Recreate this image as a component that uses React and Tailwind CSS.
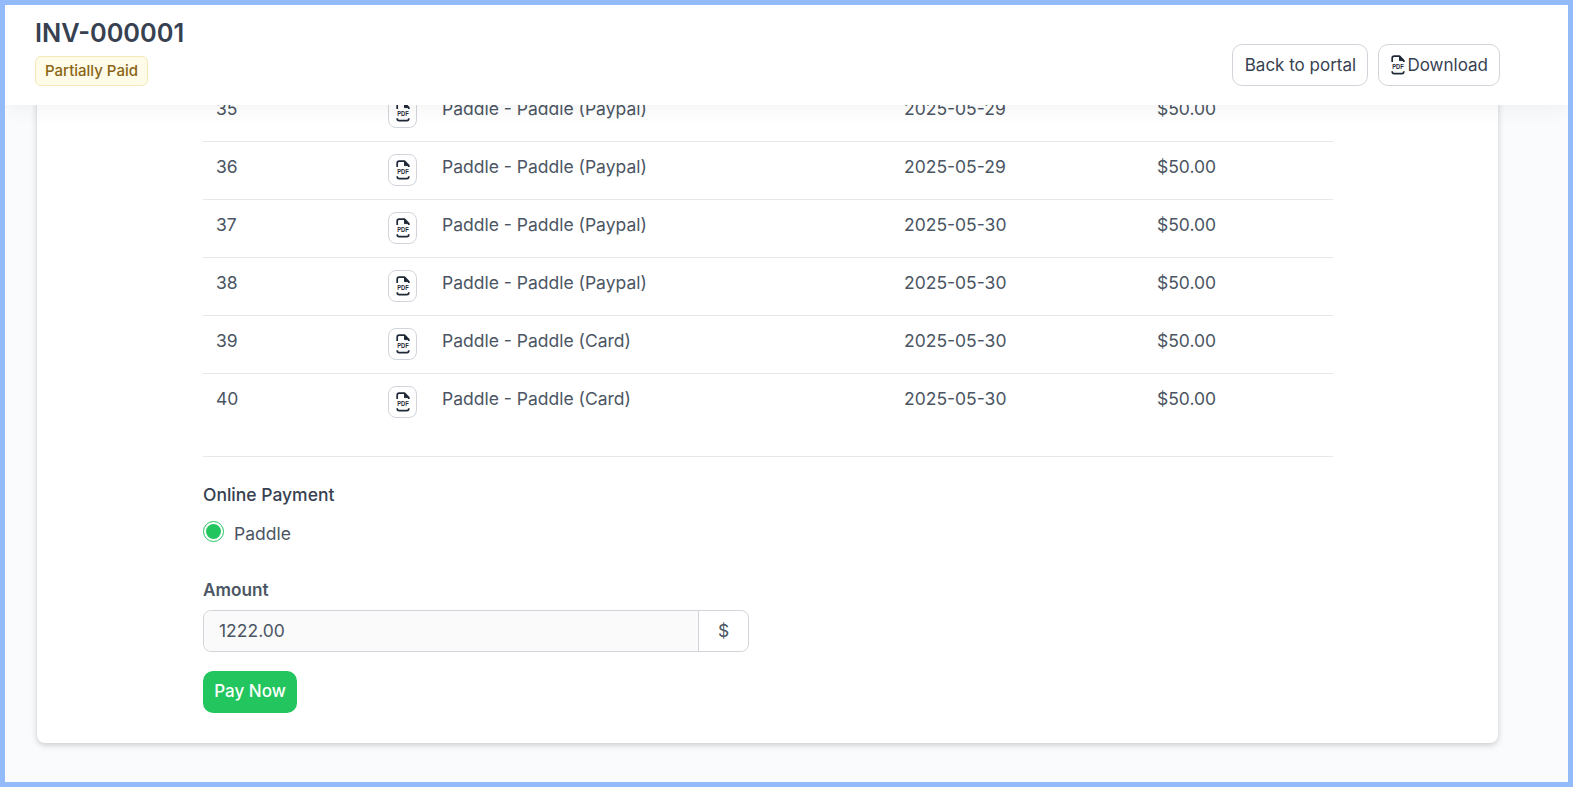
import React from "react";

const rows = [
  { id: 35, name: "Paddle - Paddle (Paypal)", date: "2025-05-29" },
  { id: 36, name: "Paddle - Paddle (Paypal)", date: "2025-05-29" },
  { id: 37, name: "Paddle - Paddle (Paypal)", date: "2025-05-30" },
  { id: 38, name: "Paddle - Paddle (Paypal)", date: "2025-05-30" },
  { id: 39, name: "Paddle - Paddle (Card)", date: "2025-05-30" },
  { id: 40, name: "Paddle - Paddle (Card)", date: "2025-05-30" },
];

function PdfIcon() {
  return (
    <svg width="16" height="20" viewBox="0 0 16 20" fill="none" className="shrink-0">
      <path d="M2.2 7V3.2C2.2 2 3 1.2 4.2 1.2H9.5L13.8 5.6V7" stroke="#1f2937" strokeWidth="1.7" strokeLinejoin="round" />
      <path d="M9.5 1.2V5.6H13.8" fill="#1f2937" stroke="#1f2937" strokeWidth="1" strokeLinejoin="round" />
      <text x="8" y="14.2" textAnchor="middle" fontSize="7.6" fontWeight="800" textLength="11.5" lengthAdjust="spacingAndGlyphs" fontFamily="Liberation Sans, sans-serif" fill="#1f2937">
        PDF
      </text>
      <path d="M2.2 16.2V16.6C2.2 17.8 3 18.7 4.2 18.7H11.8C13 18.7 13.8 17.8 13.8 16.6V16.2" stroke="#1f2937" strokeWidth="1.7" />
    </svg>
  );
}

function App() {
  return (
    <div className="relative flex h-screen flex-col justify-end overflow-hidden border-[5px] border-[#93bbf9] bg-[#f9fbfd] font-['Inter',sans-serif] text-[#4b5563]">
      <header className="absolute inset-x-0 top-0 z-10 flex h-[100px] items-start justify-between bg-white pl-[30px] pr-[68px] shadow-[0_4px_20px_rgba(0,0,0,0.05)]">
        <div className="pt-[10px]">
          <h1 className="text-[25.3px] leading-[36px] font-semibold text-[#374151]">INV-000001</h1>
          <span className="mt-[5px] inline-block rounded-md border border-[#f3e8b8] bg-[#fefce8] px-[9px] py-[5px] text-[15px] leading-[18px] font-medium text-[#8a6414]">
            Partially Paid
          </span>
        </div>
        <div className="mt-[39px] flex gap-[10px]">
          <button className="h-[42px] w-[136px] rounded-[10px] border border-[#d1d5db] bg-white pt-[2px] text-[17px] text-[#374151]">
            Back to portal
          </button>
          <button className="flex h-[42px] items-center gap-[1px] rounded-[10px] border border-[#d1d5db] bg-white px-[11px] text-[17px] text-[#374151]">
            <PdfIcon />
            <span className="pt-[2px]">Download</span>
          </button>
        </div>
      </header>

      <main className="mb-[39px] ml-[32px] mr-[70px] rounded-b-lg bg-white pb-[30px] pl-[166px] shadow-[0_2px_6px_rgba(0,0,0,0.2)]">
        <table className="w-[1130px] table-fixed text-[17.5px]">
          <colgroup>
            <col className="w-[185px]" />
            <col className="w-[54px]" />
            <col className="w-[462px]" />
            <col className="w-[253px]" />
            <col />
          </colgroup>
          <tbody>
            {rows.map((row) => (
              <tr key={row.id} className="h-[58px] border-b border-[#e5e7eb] last:border-b-0">
                <td className="pb-[6px] pl-[13px]">{row.id}</td>
                <td>
                  <span className="flex h-[32px] w-[29px] items-center justify-center rounded-lg border border-[#d1d5db] bg-white">
                    <PdfIcon />
                  </span>
                </td>
                <td className="pb-[6px]">{row.name}</td>
                <td className="pb-[6px]">{row.date}</td>
                <td className="pb-[6px]">$50.00</td>
              </tr>
            ))}
          </tbody>
        </table>

        <div className="mt-[25px] w-[1130px] border-t border-[#e5e7eb] pt-[26px]">
          <p className="text-[17.5px] leading-[24px] font-medium text-[#374151]">Online Payment</p>
          <label className="mt-[15px] flex items-start gap-[10px]">
            <span className="-mt-[1px] flex h-[21px] w-[21px] items-center justify-center rounded-full border border-[#22c55e]">
              <span className="h-[15px] w-[15px] rounded-full bg-[#22c55e]" />
            </span>
            <span className="text-[17.5px] leading-[24px]">Paddle</span>
          </label>
          <p className="mt-[32px] text-[17.2px] leading-[24px] font-semibold">Amount</p>
          <div className="mt-[8px] flex h-[42px] w-[546px] rounded-lg border border-[#d1d5db]">
            <span className="flex flex-1 items-center rounded-l-lg border-r border-[#d1d5db] bg-[#fafafa] pl-[15px] text-[17.5px]">1222.00</span>
            <span className="flex w-[49px] items-center justify-center text-[17.5px]">$</span>
          </div>
          <button className="mt-[19px] h-[42px] w-[94px] rounded-[10px] bg-[#22c55e] text-[17px] font-medium text-white">Pay Now</button>
        </div>
      </main>
    </div>
  );
}

export default App;
